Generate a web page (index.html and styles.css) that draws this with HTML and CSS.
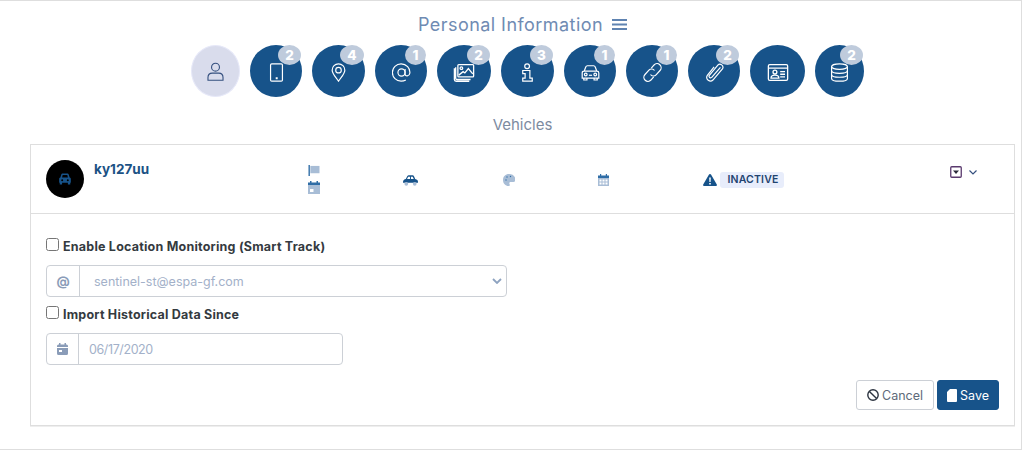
FILE: index.html
```html
<!DOCTYPE html>
<html lang="en">
<head>
<meta charset="utf-8">
<title>Personal Information</title>
<link rel="stylesheet" href="styles.css">
</head>
<body>
<div class="page">
  <h1 class="title">Personal Information
    <svg class="menu-icon" viewBox="0 0 15 11"><path d="M0 1h15M0 5.500h15M0 10h15"/></svg>
  </h1>
  <nav class="steps">
    <a class="step step-person w49"><svg viewBox="0 0 24 24"><circle cx="12" cy="6.500" r="5"/><path d="M2.500 23v-3.500c0-3.500 2.500-5.500 5.500-5.500h8c3 0 5.500 2 5.500 5.500V23z"/></svg></a>
    <a class="step w52"><span class="badge">2</span><svg viewBox="0 0 24 24"><rect x="4.500" y="1" width="15" height="22" rx="1.500"/><path class="dot" d="M11 18h2.500v2.500H11z"/></svg></a>
    <a class="step w53"><span class="badge wide">4</span><svg viewBox="0 0 24 24"><path d="M12 23C7.500 16.500 4 13 4 9a8 8 0 0 1 16 0c0 4-3.500 7.500-8 14z"/><circle cx="12" cy="9" r="3.500"/></svg></a>
    <a class="step w52"><span class="badge narrow">1</span><svg viewBox="0 0 24 24"><circle cx="12" cy="12" r="4.500"/><path d="M16.500 7.500v6.500c0 3.500 5.500 3 6-1 .800-6.500-4.500-12-11-12a11 11 0 0 0 0 22c2.500 0 4-.4 6-1.500"/></svg></a>
    <a class="step w54"><span class="badge">2</span><svg class="icon-wide" viewBox="0 0 24 24"><rect x="5" y="3" width="18" height="14" rx="1"/><path d="M2.500 6v12.500a1.500 1.500 0 0 0 1.500 1.500h15.500M1 7v13a2 2 0 0 0 2 2h15"/><circle cx="9" cy="7" r="1.500"/><path d="M6 15l5-4 2 1.500 4-5 5 6"/></svg></a>
    <a class="step w53"><span class="badge">3</span><svg viewBox="0 0 24 24"><circle cx="11.500" cy="4" r="3"/><path d="M6 9.500h9v9.500h3v4H6v-4h3v-5.500H6z"/></svg></a>
    <a class="step w52"><span class="badge narrow">1</span><svg viewBox="0 0 24 24"><path d="M4 10.500l2-5.500c.4-1 1-1.500 2-1.500h8c1 0 1.600.5 2 1.500l2 5.500M1.500 12.500c0-1.500 1-2.200 2.500-2.200h16c1.500 0 2.500.7 2.500 2.200V19h-21zM3.500 19v2.500h4V19M16.500 19v2.500h4V19"/><circle cx="6" cy="14.500" r="1.700"/><circle cx="18" cy="14.500" r="1.700"/><path d="M10 15.500h4"/></svg></a>
    <a class="step w52"><span class="badge narrow">1</span><svg viewBox="0 0 24 24"><path d="M9.500 14.500a4.500 4.500 0 0 0 7 .5l5-5.500a5 5 0 0 0-7.500-7l-3.500 4"/><path d="M14.500 9.500a4.500 4.500 0 0 0-7-.5l-5 5.500a5 5 0 0 0 7.500 7l3.500-4"/></svg></a>
    <a class="step w52"><span class="badge">2</span><svg viewBox="0 0 24 24"><path d="M19.500 5.500L8.500 18c-1.500 2-4.500-.5-3-2.500L16.500 2.500c2.500-3 8 1 5.500 5L10 21.500c-3.500 3.500-10-1-7-6L11.500 5"/></svg></a>
    <a class="step w55"><svg class="icon-wide" viewBox="0 0 24 24"><rect x="1" y="3" width="22" height="18" rx="1.500"/><path d="M1 7h22M14.500 11h5.500M14.500 14h5.500M14.500 17h5.500"/><circle cx="8.500" cy="11.500" r="2.200"/><path d="M4 18.500c0-2.300 1.800-3.500 4.500-3.500s4.500 1.200 4.500 3.500z"/></svg></a>
    <a class="step w49"><span class="badge">2</span><svg viewBox="0 0 24 24"><ellipse cx="12" cy="4.500" rx="10" ry="3.500"/><path d="M2 4.500v15C2 21.500 6.500 23 12 23s10-1.500 10-3.500v-15M2 9.500C2 11.500 6.500 13 12 13s10-1.500 10-3.500M2 14.500C2 16.500 6.500 18 12 18s10-1.500 10-3.500"/></svg></a>
  </nav>
  <h2 class="section-title">Vehicles</h2>
  <section class="card">
    <header class="card-head">
      <div class="vehicle">
        <span class="avatar"><svg viewBox="0 0 24 24"><path d="M5.500 4.500C6 3 7 2.500 8 2.500h8c1 0 2 .5 2.500 2l1.500 5c1.500.5 2 1.500 2 2.500v5.500c0 .5-.5 1-1 1v3h-4v-3H7v3H3v-3c-.5 0-1-.5-1-1V12c0-1 .5-2 2-2.500zM7 9.500h10l-1-4.300H8zM5.500 14a1.700 1.700 0 1 0 3.400 0 1.700 1.700 0 0 0-3.400 0zm9.600 0a1.700 1.700 0 1 0 3.400 0 1.700 1.700 0 0 0-3.400 0z" fill-rule="evenodd"/></svg></span>
        <span class="plate">ky127uu</span>
      </div>
      <div class="col col-flag">
        <svg class="mini" viewBox="0 0 12 12"><path class="pole" d="M0 0h1.500v12H0z"/><path class="soft" d="M2 1h10v8H2z"/></svg>
        <svg class="mini-cal" viewBox="0 0 12 13"><path class="soft" d="M0 3h12v10H0z"/><path class="pole" d="M0 1.500h12V4H0zM2 0h1.500v2H2zM8.500 0H10v2H8.500z"/><path class="white" d="M2 8h3.500v3H2z"/></svg>
      </div>
      <div class="col col-car">
        <svg class="mini-car" viewBox="0 0 16 11"><path class="navy" d="M0 7c0-2 1.500-2.500 3-3l1.500-3C5 .300 5.500 0 6 0h4c.8 0 1.500.5 2 1.500L13 4c2 .5 3 1.200 3 3v1H0z"/><path class="white" d="M5.500 1.500h2v2.500H4.300zM8.500 1.500h1.800l1.200 2.500H8.500z"/><circle class="soft" cx="3.500" cy="9" r="2"/><circle class="soft" cx="12.500" cy="9" r="2"/></svg>
      </div>
      <div class="col col-palette">
        <svg class="mini-pal" viewBox="0 0 12 12"><path class="soft" d="M6 0C2.500 0 0 2.500 0 6s2.500 6 5.500 6c1.500 0 1.500-1 1-2-.5-1.200 0-2 1.500-2h2.500c1 0 2-.8 2-2C12.500 2 9.500 0 6 0z"/><circle class="pole" cx="3" cy="6" r=".7"/><circle class="pole" cx="4" cy="3" r=".7"/><circle class="pole" cx="7.500" cy="2.500" r=".7"/></svg>
      </div>
      <div class="col col-date">
        <svg class="mini-date" viewBox="0 0 11 12"><path class="soft" d="M0 2h11v10H0z"/><path class="pole" d="M0 1.500h11V4H0zM2 0h1.200v2H2zM7.800 0H9v2H7.800z"/><path class="white" d="M1.500 5.500h2v2h-2zM4.500 5.500h2v2h-2zM7.500 5.500h2v2h-2zM1.500 8.500h2v2h-2zM4.500 8.500h2v2h-2zM7.500 8.500h2v2h-2z"/></svg>
      </div>
      <div class="col col-status">
        <svg class="warn" viewBox="0 0 14 12"><path class="navy" d="M7 0c.5 0 .8.200 1 .6l5.800 10c.3.600-.1 1.400-.8 1.400H1c-.7 0-1.100-.8-.8-1.400L6 .6C6.200.2 6.500 0 7 0z"/><path class="white" d="M6.200 3.500h1.600l-.2 4.500H6.400zM6.200 9h1.600v1.500H6.200z"/></svg>
        <span class="status">INACTIVE</span>
      </div>
      <div class="col col-actions">
        <svg class="box" viewBox="0 0 12 12"><rect x=".75" y=".75" width="10.500" height="10.500" rx="1"/><path d="M3 4.500h6L6 8z"/></svg>
        <svg class="chev" viewBox="0 0 8 5"><path d="M.5.500L4 4 7.500.5"/></svg>
      </div>
    </header>
    <form class="card-body">
      <label class="check"><input type="checkbox"><span>Enable Location Monitoring (Smart Track)</span></label>
      <div class="group group-email">
        <span class="addon addon-email">@</span>
        <select class="control select"><option>sentinel-st@espa-gf.com</option></select>
        <svg class="select-chev" viewBox="0 0 10 6"><path d="M1 1l4 4 4-4"/></svg>
      </div>
      <label class="check check-second"><input type="checkbox"><span>Import Historical Data Since</span></label>
      <div class="group group-date">
        <span class="addon addon-date"><svg viewBox="0 0 11 12"><path d="M0 3a1.500 1.500 0 0 1 1.500-1.500H2V0h1.500v1.500h4V0H9v1.500h.5A1.500 1.500 0 0 1 11 3v1H0zM0 5h11v5.500a1.500 1.500 0 0 1-1.500 1.500h-8A1.500 1.500 0 0 1 0 10.500zM2 7v2h3V7z" fill-rule="evenodd"/></svg></span>
        <input class="control date" type="text" value="06/17/2020">
      </div>
      <div class="actions">
        <button class="btn btn-cancel" type="button"><svg viewBox="0 0 12 12"><circle cx="6" cy="6" r="5.200"/><path d="M2.400 2.400l7.200 7.200"/></svg>Cancel</button>
        <button class="btn btn-save" type="button"><svg viewBox="0 0 10 13"><path d="M3 0h6a1 1 0 0 1 1 1v11a1 1 0 0 1-1 1H1a1 1 0 0 1-1-1V3z"/></svg>Save</button>
      </div>
    </form>
  </section>
</div>
</body>
</html>
```
FILE: styles.css
```css
* { box-sizing: border-box; }
html, body { margin: 0; padding: 0; }
body {
  font-family: "Inter", "Liberation Sans", sans-serif;
  background: #fff;
  color: #333;
}
.page {
  width: 1022px;
  height: 450px;
  border-top: 1px solid #dedede;
  border-right: 1px solid #dedede;
  border-bottom: 1px solid #dedede;
  padding: 0 6px 0 30px;
}
.title {
  margin: 12px 0 0;
  height: 23px;
  font-size: 18px;
  line-height: 23px;
  font-weight: 400;
  letter-spacing: .45px;
  color: #6f8bb3;
  display: flex;
  justify-content: center;
  align-items: center;
  gap: 9px;
}
.menu-icon { width: 15px; height: 11px; }
.menu-icon path { stroke: #5f83b1; stroke-width: 2; fill: none; }
.steps {
  display: flex;
  gap: 10px;
  margin: 9px 0 0 161px;
  height: 52px;
}
.step {
  position: relative;
  height: 52px;
  border-radius: 50%;
  background: #17538a;
  display: flex;
  align-items: center;
  justify-content: center;
}
.w49 { width: 49px; }
.w52 { width: 52px; }
.w53 { width: 53px; }
.w54 { width: 54px; }
.w55 { width: 55px; }
.step svg {
  width: 19px;
  height: 19px;
  fill: none;
  stroke: #fff;
  stroke-width: 1.500;
  margin-top: 3px;
}
.step svg.icon-wide { width: 22px; height: 21px; }
.step svg .dot { fill: #fff; stroke: none; }
.step-person {
  background: #d9dcec;
  border: 1px solid #e6e8f8;
}
.step-person svg { stroke: #35507f; width: 19px; height: 19px; stroke-width: 1.400; margin-top: 0; }
.badge {
  position: absolute;
  top: 0;
  right: 1px;
  width: 23px;
  height: 20px;
  border-radius: 50%;
  background: #bfcbdc;
  color: #fff;
  font-size: 13.500px;
  font-weight: 800;
  line-height: 20px;
  text-align: center;
}
.badge.wide { width: 24px; }
.badge.narrow { width: 21px; }
.section-title {
  margin: 18px 0 0;
  height: 20px;
  text-align: center;
  font-size: 15px;
  line-height: 20px;
  font-weight: 400;
  color: #7d8b9f;
}
.card {
  margin-top: 9px;
  width: 985px;
  height: 282px;
  border: 1px solid #dedede;
  box-shadow: 0 1px 0 #eee;
}
.card-head {
  height: 69px;
  border-bottom: 1px solid #dedede;
  display: grid;
  grid-template-columns: 262px 95px 100px 95px 105px 247px 1fr;
  align-items: center;
  padding-left: 15px;
}
.vehicle { display: flex; align-items: flex-start; gap: 10px; }
.avatar {
  width: 38px;
  height: 38px;
  border-radius: 50%;
  background: #000;
  display: flex;
  align-items: center;
  justify-content: center;
}
.avatar svg { width: 14px; height: 14px; fill: #17538a; }
.plate {
  font-size: 13.500px;
  font-weight: 700;
  color: #1b5285;
  line-height: 18px;
}
.col { display: flex; align-items: center; }
.col-flag { flex-direction: column; align-items: flex-start; gap: 5px; padding-top: 1px; }
.col-car, .col-palette, .col-date { padding-top: 2px; }
.mini { width: 12px; height: 11px; display: block; }
.mini-cal { width: 12px; height: 13px; display: block; }
.mini-car { width: 15px; height: 11px; }
.mini-pal { width: 12px; height: 12px; }
.mini-date { width: 11px; height: 12px; }
.pole { fill: #2f6da6; }
.navy { fill: #17538a; }
.soft { fill: #a8bdd6; }
.white { fill: #fff; }
.col-status { gap: 3px; padding-top: 2px; }
.warn { width: 14px; height: 12px; }
.status {
  background: #e8edfb;
  border-radius: 3px;
  width: 64px;
  height: 16px;
  font-size: 10.500px;
  line-height: 16px;
  font-weight: 600;
  letter-spacing: .15px;
  padding-left: 2px;
  color: #22436f;
  text-align: center;
}
.col-actions { gap: 7px; padding-bottom: 14px; }
.box { width: 12px; height: 12px; }
.box rect { fill: none; stroke: #5a3a6e; stroke-width: 1.300; }
.box path { fill: #2a2a3a; }
.chev { width: 8px; height: 5px; fill: none; stroke: #35507f; stroke-width: 1.200; }
.card-body { padding: 24px 15px 0; }
.check {
  display: flex;
  align-items: center;
  gap: 4px;
  height: 14px;
  font-size: 12.500px;
  font-weight: 700;
  color: #343a40;
  letter-spacing: .22px;
}
.check span { position: relative; top: 1px; }
.check input {
  width: 13px;
  height: 13px;
  margin: -2px 0 0;
  flex: none;
}
.check-second { margin-top: 9px; }
.group {
  position: relative;
  display: flex;
  height: 32px;
  border: 1px solid #ccd0d6;
  border-radius: 4px;
  background: #fff;
}
.group-email { width: 461px; margin-top: 13px; }
.group-date { width: 297px; margin-top: 13px; }
.addon {
  flex: none;
  display: flex;
  align-items: center;
  justify-content: center;
  border-right: 1px solid #ccd0d6;
  color: #8a9cb8;
}
.addon-email { width: 33px; font-size: 13px; font-weight: 700; }
.addon-date { width: 32px; }
.addon-date svg { width: 11px; height: 12px; fill: #8a9cb8; }
.control {
  flex: 1;
  min-width: 0;
  border: 0;
  background: transparent;
  appearance: none;
  font-family: inherit;
  font-size: 12.500px;
  color: #a3b1c9;
  outline: 0;
}
.select { padding: 0 0 0 14px; }
.date { padding: 0 0 0 10px; letter-spacing: -.4px; }
.select-chev {
  position: absolute;
  right: 4px;
  top: 12px;
  width: 10px;
  height: 6px;
  fill: none;
  stroke: #8ea3c0;
  stroke-width: 1.800;
}
.actions {
  display: flex;
  justify-content: flex-end;
  gap: 3px;
  margin: 15px 0 0;
}
.btn {
  height: 30px;
  border-radius: 3px;
  font-family: inherit;
  font-size: 12.500px;
  display: flex;
  align-items: center;
  justify-content: center;
  gap: 3px;
  padding: 0;
}
.btn svg { flex: none; }
.btn-cancel {
  width: 78px;
  background: #fff;
  border: 1px solid #ccd0d6;
  color: #5e6a7a;
}
.btn-cancel svg { width: 12px; height: 12px; fill: none; stroke: #2c3440; stroke-width: 1.400; }
.btn-save {
  width: 62px;
  background: #17538a;
  border: 1px solid #17538a;
  color: #fff;
}
.btn-save svg { width: 10px; height: 13px; fill: #fff; }
```
